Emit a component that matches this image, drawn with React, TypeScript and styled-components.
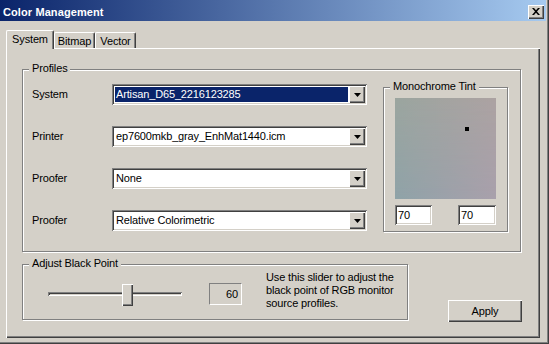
import React from 'react';
import styled, { createGlobalStyle, css } from 'styled-components';

const FACE = '#d4d0c8';
const SHADOW = '#808080';
const DARK = '#404040';
const HILITE = '#ffffff';

const Global = createGlobalStyle`
  html, body { margin: 0; padding: 0; background: ${FACE}; }
  body {
    font-family: "Liberation Sans", Arial, sans-serif;
    font-size: 11px;
    letter-spacing: -0.15px;
    color: #000;
  }
  * { box-sizing: border-box; }
`;

const raised = css`
  box-shadow: inset 1px 1px ${HILITE}, inset -1px -1px ${DARK}, inset -2px -2px ${SHADOW};
`;

const sunken = css`
  box-shadow: inset 1px 1px ${SHADOW}, inset -1px -1px ${HILITE}, inset 2px 2px ${DARK},
    inset -2px -2px ${FACE};
`;

const Window = styled.div`
  width: 549px;
  height: 344px;
  background: ${FACE};
  padding-right: 3px;
  display: flex;
  flex-direction: column;
  box-shadow: inset -1px -1px ${DARK}, inset -2px -2px ${SHADOW};
  overflow: hidden;
`;

const TitleBar = styled.div`
  height: 21px;
  flex: none;
  display: flex;
  align-items: flex-start;
  justify-content: space-between;
  padding-left: 3px;
  background: linear-gradient(to right, #0a246a, #a6caf0);
`;

const TitleText = styled.div`
  color: #fff;
  font-weight: bold;
  font-size: 11px;
  letter-spacing: 0.1px;
  line-height: 13px;
  padding-top: 6px;
`;

const CloseButton = styled.div`
  width: 16px;
  height: 14px;
  margin: 5px 2px 0 0;
  background: ${FACE};
  display: flex;
  align-items: center;
  justify-content: center;
  padding: 0 1px 1px 0;
  ${raised}
`;

const Content = styled.div`
  display: flex;
  flex-direction: column;
  padding-left: 6px;
`;

const TabStrip = styled.div`
  display: flex;
  align-items: flex-end;
  height: 18px;
  margin-top: 9px;
`;

const Tab = styled.div<{ $active?: boolean; $w: number }>`
  width: ${(p) => p.$w}px;
  height: ${(p) => (p.$active ? 19 : 16)}px;
  margin-bottom: ${(p) => (p.$active ? -1 : 0)}px;
  position: relative;
  z-index: ${(p) => (p.$active ? 1 : 0)};
  background: ${FACE};
  border-top: 1px solid ${HILITE};
  border-left: 1px solid ${HILITE};
  border-right: 1px solid ${DARK};
  border-radius: 2px 2px 0 0;
  box-shadow: inset -1px 0 ${SHADOW};
  padding-top: 2px;
  line-height: 13px;
  text-align: center;
`;

const Panel = styled.div`
  width: 534px;
  height: 290px;
  display: flex;
  flex-direction: column;
  padding: 21px 0 0 16px;
  box-shadow: inset 1px 1px ${HILITE}, inset -1px -1px ${DARK}, inset -2px -2px ${SHADOW};
`;

const GroupBox = styled.div<{ $w: number; $h: number }>`
  position: relative;
  flex: none;
  width: ${(p) => p.$w}px;
  height: ${(p) => p.$h}px;
  border: 1px solid ${SHADOW};
  box-shadow: inset 1px 1px ${HILITE}, 1px 1px ${HILITE};
`;

const Legend = styled.span`
  position: absolute;
  top: -8px;
  left: 6px;
  padding: 0 3px 0 3px;
  line-height: 13px;
  background: ${FACE};
  white-space: nowrap;
`;

const ProfilesBody = styled.div`
  display: flex;
  align-items: flex-start;
  padding: 14px 0 0 9px;
`;

const FieldGrid = styled.div`
  display: grid;
  grid-template-columns: 80px 255px;
  grid-auto-rows: 21px;
  row-gap: 21px;
  align-items: center;
`;

const FieldLabel = styled.div`
  line-height: 13px;
`;

const Combo = styled.div`
  display: flex;
  width: 255px;
  height: 21px;
  padding: 2px;
  background: #fff;
  ${sunken}
`;

const ComboText = styled.div<{ $focused?: boolean }>`
  flex: 1;
  margin: 1px;
  padding-left: 1px;
  display: flex;
  align-items: center;
  white-space: nowrap;
  overflow: hidden;
  line-height: 13px;
  ${(p) =>
    p.$focused &&
    css`
      background: #0a246a;
      color: #fff;
    `}
`;

const DropButton = styled.div`
  width: 16px;
  flex: none;
  display: flex;
  align-items: center;
  justify-content: center;
  background: ${FACE};
  ${raised}
`;

const MonoBox = styled(GroupBox)`
  margin: 3px 0 0 16px;
  padding: 10px 0 0 11px;
`;

const TintSquare = styled.div`
  position: relative;
  width: 101px;
  height: 101px;
  background: linear-gradient(to right, #8fa3a8, #a9a0ac);
  &::before {
    content: '';
    position: absolute;
    inset: 0;
    background: linear-gradient(to right, #9ba59f, #aca2a2);
    -webkit-mask-image: linear-gradient(to bottom, #000, transparent);
    mask-image: linear-gradient(to bottom, #000, transparent);
  }
`;

const TintDot = styled.div`
  position: absolute;
  width: 4px;
  height: 4px;
  background: #000;
  z-index: 1;
`;

const TintInputs = styled.div`
  display: flex;
  justify-content: space-between;
  width: 101px;
  margin-top: 6px;
`;

const EditBox = styled.div<{ $w: number }>`
  width: ${(p) => p.$w}px;
  height: 20px;
  background: #fff;
  padding: 2px 0 0 3px;
  line-height: 16px;
  ${sunken}
`;

const BottomRow = styled.div`
  display: flex;
  align-items: flex-start;
  margin-top: 12px;
`;

const BlackPointBody = styled.div`
  display: flex;
  align-items: flex-start;
  padding-left: 25px;
`;

const Slider = styled.div`
  position: relative;
  width: 134px;
  height: 22px;
  margin-top: 19px;
  flex: none;
`;

const SliderTrack = styled.div`
  position: absolute;
  left: 0;
  right: 0;
  top: 8px;
  height: 4px;
  ${sunken}
`;

const SliderThumb = styled.div`
  position: absolute;
  top: 0;
  width: 11px;
  height: 22px;
  background: ${FACE};
  ${raised}
`;

const ValueBox = styled.div`
  width: 33px;
  height: 22px;
  margin: 18px 0 0 27px;
  flex: none;
  display: flex;
  align-items: center;
  justify-content: flex-end;
  padding-right: 3px;
  border-top: 1px solid ${SHADOW};
  border-left: 1px solid ${SHADOW};
  border-right: 1px solid ${HILITE};
  border-bottom: 1px solid ${HILITE};
`;

const HelpText = styled.div`
  margin: 6px 0 0 24px;
  line-height: 13px;
  white-space: nowrap;
`;

const ApplyButton = styled.div`
  width: 74px;
  height: 22px;
  margin: 36px 0 0 40px;
  display: flex;
  align-items: center;
  justify-content: center;
  background: ${FACE};
  padding-bottom: 1px;
  ${raised}
`;

const Arrow = () => (
  <svg width="7" height="4" viewBox="0 0 7 4">
    <path d="M0 0 H7 L3.5 4 Z" fill="#000" />
  </svg>
);

const rows = [
  { label: 'System', value: 'Artisan_D65_2216123285', focused: true },
  { label: 'Printer', value: 'ep7600mkb_gray_EnhMat1440.icm' },
  { label: 'Proofer', value: 'None' },
  { label: 'Proofer', value: 'Relative Colorimetric' },
];

export default function App() {
  return (
    <>
      <Global />
      <Window>
        <TitleBar>
          <TitleText>Color Management</TitleText>
          <CloseButton aria-label="Close">
            <svg width="8" height="7" viewBox="0 0 8 7">
              <path
                d="M0 0 H2 L4 2.3 L6 0 H8 L5 3.5 L8 7 H6 L4 4.7 L2 7 H0 L3 3.5 Z"
                fill="#000"
              />
            </svg>
          </CloseButton>
        </TitleBar>
        <Content>
          <TabStrip>
            <Tab $active $w={48}>
              System
            </Tab>
            <Tab $w={41}>Bitmap</Tab>
            <Tab $w={41}>Vector</Tab>
          </TabStrip>
          <Panel>
            <GroupBox $w={499} $h={183}>
              <Legend>Profiles</Legend>
              <ProfilesBody>
                <FieldGrid>
                  {rows.map((r, i) => (
                    <React.Fragment key={i}>
                      <FieldLabel>{r.label}</FieldLabel>
                      <Combo>
                        <ComboText $focused={r.focused}>{r.value}</ComboText>
                        <DropButton>
                          <Arrow />
                        </DropButton>
                      </Combo>
                    </React.Fragment>
                  ))}
                </FieldGrid>
                <MonoBox $w={125} $h={145}>
                  <Legend>Monochrome Tint</Legend>
                  <TintSquare>
                    <TintDot style={{ left: 70, top: 29 }} />
                  </TintSquare>
                  <TintInputs>
                    <EditBox $w={37}>70</EditBox>
                    <EditBox $w={38}>70</EditBox>
                  </TintInputs>
                </MonoBox>
              </ProfilesBody>
            </GroupBox>
            <BottomRow>
              <GroupBox $w={386} $h={56}>
                <Legend>Adjust Black Point</Legend>
                <BlackPointBody>
                  <Slider>
                    <SliderTrack />
                    <SliderThumb style={{ left: 74 }} />
                  </Slider>
                  <ValueBox>60</ValueBox>
                  <HelpText>
                    Use this slider to adjust the
                    <br />
                    black point of RGB monitor
                    <br />
                    source profiles.
                  </HelpText>
                </BlackPointBody>
              </GroupBox>
              <ApplyButton>Apply</ApplyButton>
            </BottomRow>
          </Panel>
        </Content>
      </Window>
    </>
  );
}
